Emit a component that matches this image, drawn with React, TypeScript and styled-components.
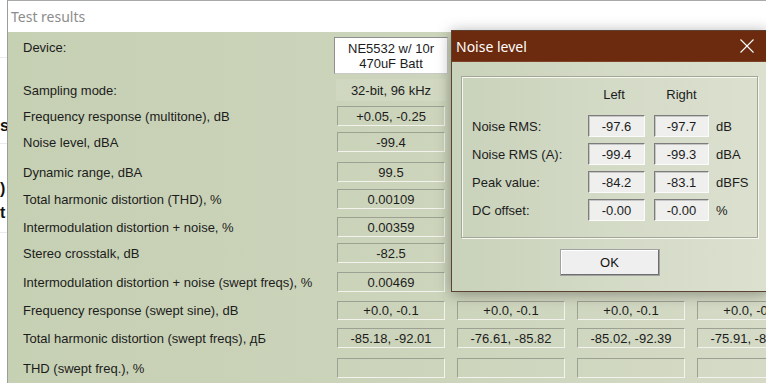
import React from "react";
import styled, { createGlobalStyle } from "styled-components";

const GlobalStyle = createGlobalStyle`
  html, body { margin: 0; padding: 0; background: #ffffff; }
  body {
    font-family: "Liberation Sans", Arial, sans-serif;
    font-size: 13px;
    color: #1c1c1c;
  }
  * { box-sizing: border-box; }
`;

const Screen = styled.div`
  position: relative;
  width: 766px;
  height: 383px;
  overflow: hidden;
  display: flex;
  background: #ffffff;
`;

/* --- window behind, barely visible on the left --- */
const BackStrip = styled.div`
  flex: none;
  width: 7px;
  overflow: hidden;
  display: flex;
  flex-direction: column;
  background: #ffffff;
`;

const BackLine = styled.div<{ $gap: number }>`
  flex: none;
  margin-top: ${(p) => p.$gap}px;
  height: 1px;
  background: #ebebeb;
`;

const BackGlyph = styled.div<{ $gap: number }>`
  flex: none;
  margin-top: ${(p) => p.$gap}px;
  height: 16px;
  line-height: 16px;
  font-size: 16px;
  font-weight: bold;
  color: #111111;
  white-space: nowrap;
`;

/* --- main window --- */
const Window = styled.div`
  flex: none;
  width: 900px;
  display: flex;
  flex-direction: column;
  border-left: 1px solid #9d9d9d;
  border-top: 1px solid #a9a9a9;
`;

const WinTitle = styled.div`
  flex: none;
  height: 31px;
  display: flex;
  align-items: center;
  padding-left: 3px;
  background: #ffffff;
  font-family: "Noto Sans", "Open Sans", sans-serif;
  font-size: 14px;
  color: #8c8c8c;
`;

const Content = styled.div`
  flex: 1;
  padding: 5px 0 0 15px;
  background: linear-gradient(90deg, #c6d0b3 0%, #ccd4bb 45%, #d8ddca 100%);
`;

const Row = styled.div<{ $gap: number; $top?: boolean }>`
  display: flex;
  align-items: ${(p) => (p.$top ? "flex-start" : "center")};
  margin-top: ${(p) => p.$gap}px;
`;

const Label = styled.div<{ $offset?: number }>`
  flex: none;
  width: 314px;
  line-height: 15px;
  white-space: nowrap;
  margin-top: ${(p) => p.$offset ?? 0}px;
`;

const Cells = styled.div`
  display: flex;
  gap: 12px;
`;

const Cell = styled.div<{ $h: number }>`
  flex: none;
  width: 108px;
  height: ${(p) => p.$h}px;
  display: flex;
  align-items: center;
  justify-content: center;
  white-space: nowrap;
  border-style: solid;
  border-width: 1px;
  border-color: #9da193 #f2f3ec #f2f3ec #9da193;
`;

const DeviceBox = styled.div`
  flex: none;
  width: 114px;
  height: 37px;
  margin-left: -3px;
  display: flex;
  flex-direction: column;
  align-items: center;
  justify-content: center;
  line-height: 15px;
  background: #ffffff;
  border: 1px solid;
  border-color: #8f8f8f #c9c9c9 #c9c9c9 #8f8f8f;
`;

const PlainBox = styled.div`
  flex: none;
  width: 110px;
  height: 22px;
  margin-left: -1px;
  display: flex;
  align-items: center;
  justify-content: center;
  background: rgba(255, 255, 255, 0.1);
`;

/* --- dialog --- */
const Dialog = styled.div`
  position: absolute;
  left: 451px;
  top: 30px;
  width: 317px;
  height: 262px;
  display: flex;
  flex-direction: column;
  border: 1px solid #5b4334;
  box-shadow: 0 2px 14px rgba(0, 0, 0, 0.35);
`;

const DlgTitle = styled.div`
  flex: none;
  height: 31px;
  display: flex;
  align-items: center;
  justify-content: space-between;
  padding-left: 4px;
  background: #6c2b0e;
  border-bottom: 1px solid #7e4227;
  color: #ffffff;
  font-family: "Noto Sans", "Open Sans", sans-serif;
  font-size: 14px;
`;

const CloseBtn = styled.div`
  width: 40px;
  height: 30px;
  display: flex;
  align-items: center;
  justify-content: center;
`;

const DlgBody = styled.div`
  flex: 1;
  display: flex;
  flex-direction: column;
  padding: 14px 9px 0;
  background: linear-gradient(90deg, #c9d2ba 0%, #d3dac6 50%, #dce1cf 100%);
`;

const GroupBox = styled.div`
  height: 162px;
  padding: 8px 0 0 10px;
  display: grid;
  grid-template-columns: 116px 66px 62px 1fr;
  grid-template-rows: 24px repeat(4, 22px);
  row-gap: 6px;
  border: 1px solid #a3a797;
  box-shadow: inset 1px 1px 0 #f6f7f1, 1px 1px 0 #f6f7f1;
`;

const HeadCell = styled.div<{ $w: number }>`
  align-self: start;
  width: ${(p) => p.$w}px;
  height: 20px;
  line-height: 20px;
  text-align: center;
`;

const DlgLabel = styled.div`
  align-self: center;
  line-height: 15px;
  white-space: nowrap;
`;

const DlgBox = styled.div<{ $w: number }>`
  width: ${(p) => p.$w}px;
  height: 22px;
  display: flex;
  align-items: center;
  justify-content: center;
  background: #efefee;
  border: 1px solid;
  border-color: #7c7c7c #fbfbfb #fbfbfb #7c7c7c;
  box-shadow: inset 1px 1px 0 #c6c6c6;
`;

const Unit = styled.div`
  align-self: center;
  line-height: 15px;
`;

const ButtonRow = styled.div`
  display: flex;
  justify-content: center;
  margin-top: 11px;
`;

const OkButton = styled.div`
  width: 100px;
  height: 27px;
  display: flex;
  align-items: center;
  justify-content: center;
  background: #efefef;
  border: 1px solid #a2a2a2;
  box-shadow: inset -1px -1px 0 #6e6e6e, inset 1px 1px 0 #ffffff;
  color: #111111;
`;

type RowData = { label: string; gap: number; h: number; values: string[] };

const rows: RowData[] = [
  { label: "Frequency response (multitone), dB", gap: 5, h: 20, values: ["+0.05, -0.25"] },
  { label: "Noise level, dBA", gap: 6, h: 20, values: ["-99.4"] },
  { label: "Dynamic range, dBA", gap: 10, h: 20, values: ["99.5"] },
  { label: "Total harmonic distortion (THD), %", gap: 7, h: 20, values: ["0.00109"] },
  { label: "Intermodulation distortion + noise, %", gap: 8, h: 20, values: ["0.00359"] },
  { label: "Stereo crosstalk, dB", gap: 6, h: 20, values: ["-82.5"] },
  { label: "Intermodulation distortion + noise (swept freqs), %", gap: 9, h: 20, values: ["0.00469"] },
  {
    label: "Frequency response (swept sine), dB",
    gap: 9,
    h: 19,
    values: ["+0.0, -0.1", "+0.0, -0.1", "+0.0, -0.1", "+0.0, -0.1"],
  },
  {
    label: "Total harmonic distortion (swept freqs), дБ",
    gap: 8,
    h: 20,
    values: ["-85.18, -92.01", "-76.61, -85.82", "-85.02, -92.39", "-75.91, -86.20"],
  },
  { label: "THD (swept freq.), %", gap: 10, h: 20, values: ["", "", "", ""] },
];

const noise = [
  { label: "Noise RMS:", l: "-97.6", r: "-97.7", unit: "dB" },
  { label: "Noise RMS (A):", l: "-99.4", r: "-99.3", unit: "dBA" },
  { label: "Peak value:", l: "-84.2", r: "-83.1", unit: "dBFS" },
  { label: "DC offset:", l: "-0.00", r: "-0.00", unit: "%" },
];

export default function App() {
  return (
    <Screen>
      <GlobalStyle />
      <BackStrip>
        <BackLine $gap={57} />
        <BackGlyph $gap={60}>s</BackGlyph>
        <BackLine $gap={9} />
        <BackGlyph $gap={37}>)</BackGlyph>
        <BackGlyph $gap={8}>t</BackGlyph>
        <BackLine $gap={11} />
      </BackStrip>

      <Window>
        <WinTitle>Test results</WinTitle>
        <Content>
          <Row $gap={0} $top>
            <Label $offset={3}>Device:</Label>
            <DeviceBox>
              <span>NE5532 w/ 10r</span>
              <span>470uF Batt</span>
            </DeviceBox>
          </Row>
          <Row $gap={5}>
            <Label>Sampling mode:</Label>
            <PlainBox>32-bit, 96 kHz</PlainBox>
          </Row>
          {rows.map((r) => (
            <Row key={r.label} $gap={r.gap}>
              <Label>{r.label}</Label>
              <Cells>
                {r.values.map((v, i) => (
                  <Cell key={i} $h={r.h}>
                    {v}
                  </Cell>
                ))}
              </Cells>
            </Row>
          ))}
        </Content>
      </Window>

      <Dialog>
        <DlgTitle>
          <span>Noise level</span>
          <CloseBtn>
            <svg width="14" height="14" viewBox="0 0 14 14">
              <path d="M0.5 0.5 L13.5 13.5 M13.5 0.5 L0.5 13.5" stroke="#ffffff" strokeWidth="1.1" fill="none" />
            </svg>
          </CloseBtn>
        </DlgTitle>
        <DlgBody>
          <GroupBox>
            <span />
            <HeadCell $w={52}>Left</HeadCell>
            <HeadCell $w={55}>Right</HeadCell>
            <span />
            {noise.map((n) => (
              <React.Fragment key={n.label}>
                <DlgLabel>{n.label}</DlgLabel>
                <DlgBox $w={57}>{n.l}</DlgBox>
                <DlgBox $w={55}>{n.r}</DlgBox>
                <Unit>{n.unit}</Unit>
              </React.Fragment>
            ))}
          </GroupBox>
          <ButtonRow>
            <OkButton>OK</OkButton>
          </ButtonRow>
        </DlgBody>
      </Dialog>
    </Screen>
  );
}
